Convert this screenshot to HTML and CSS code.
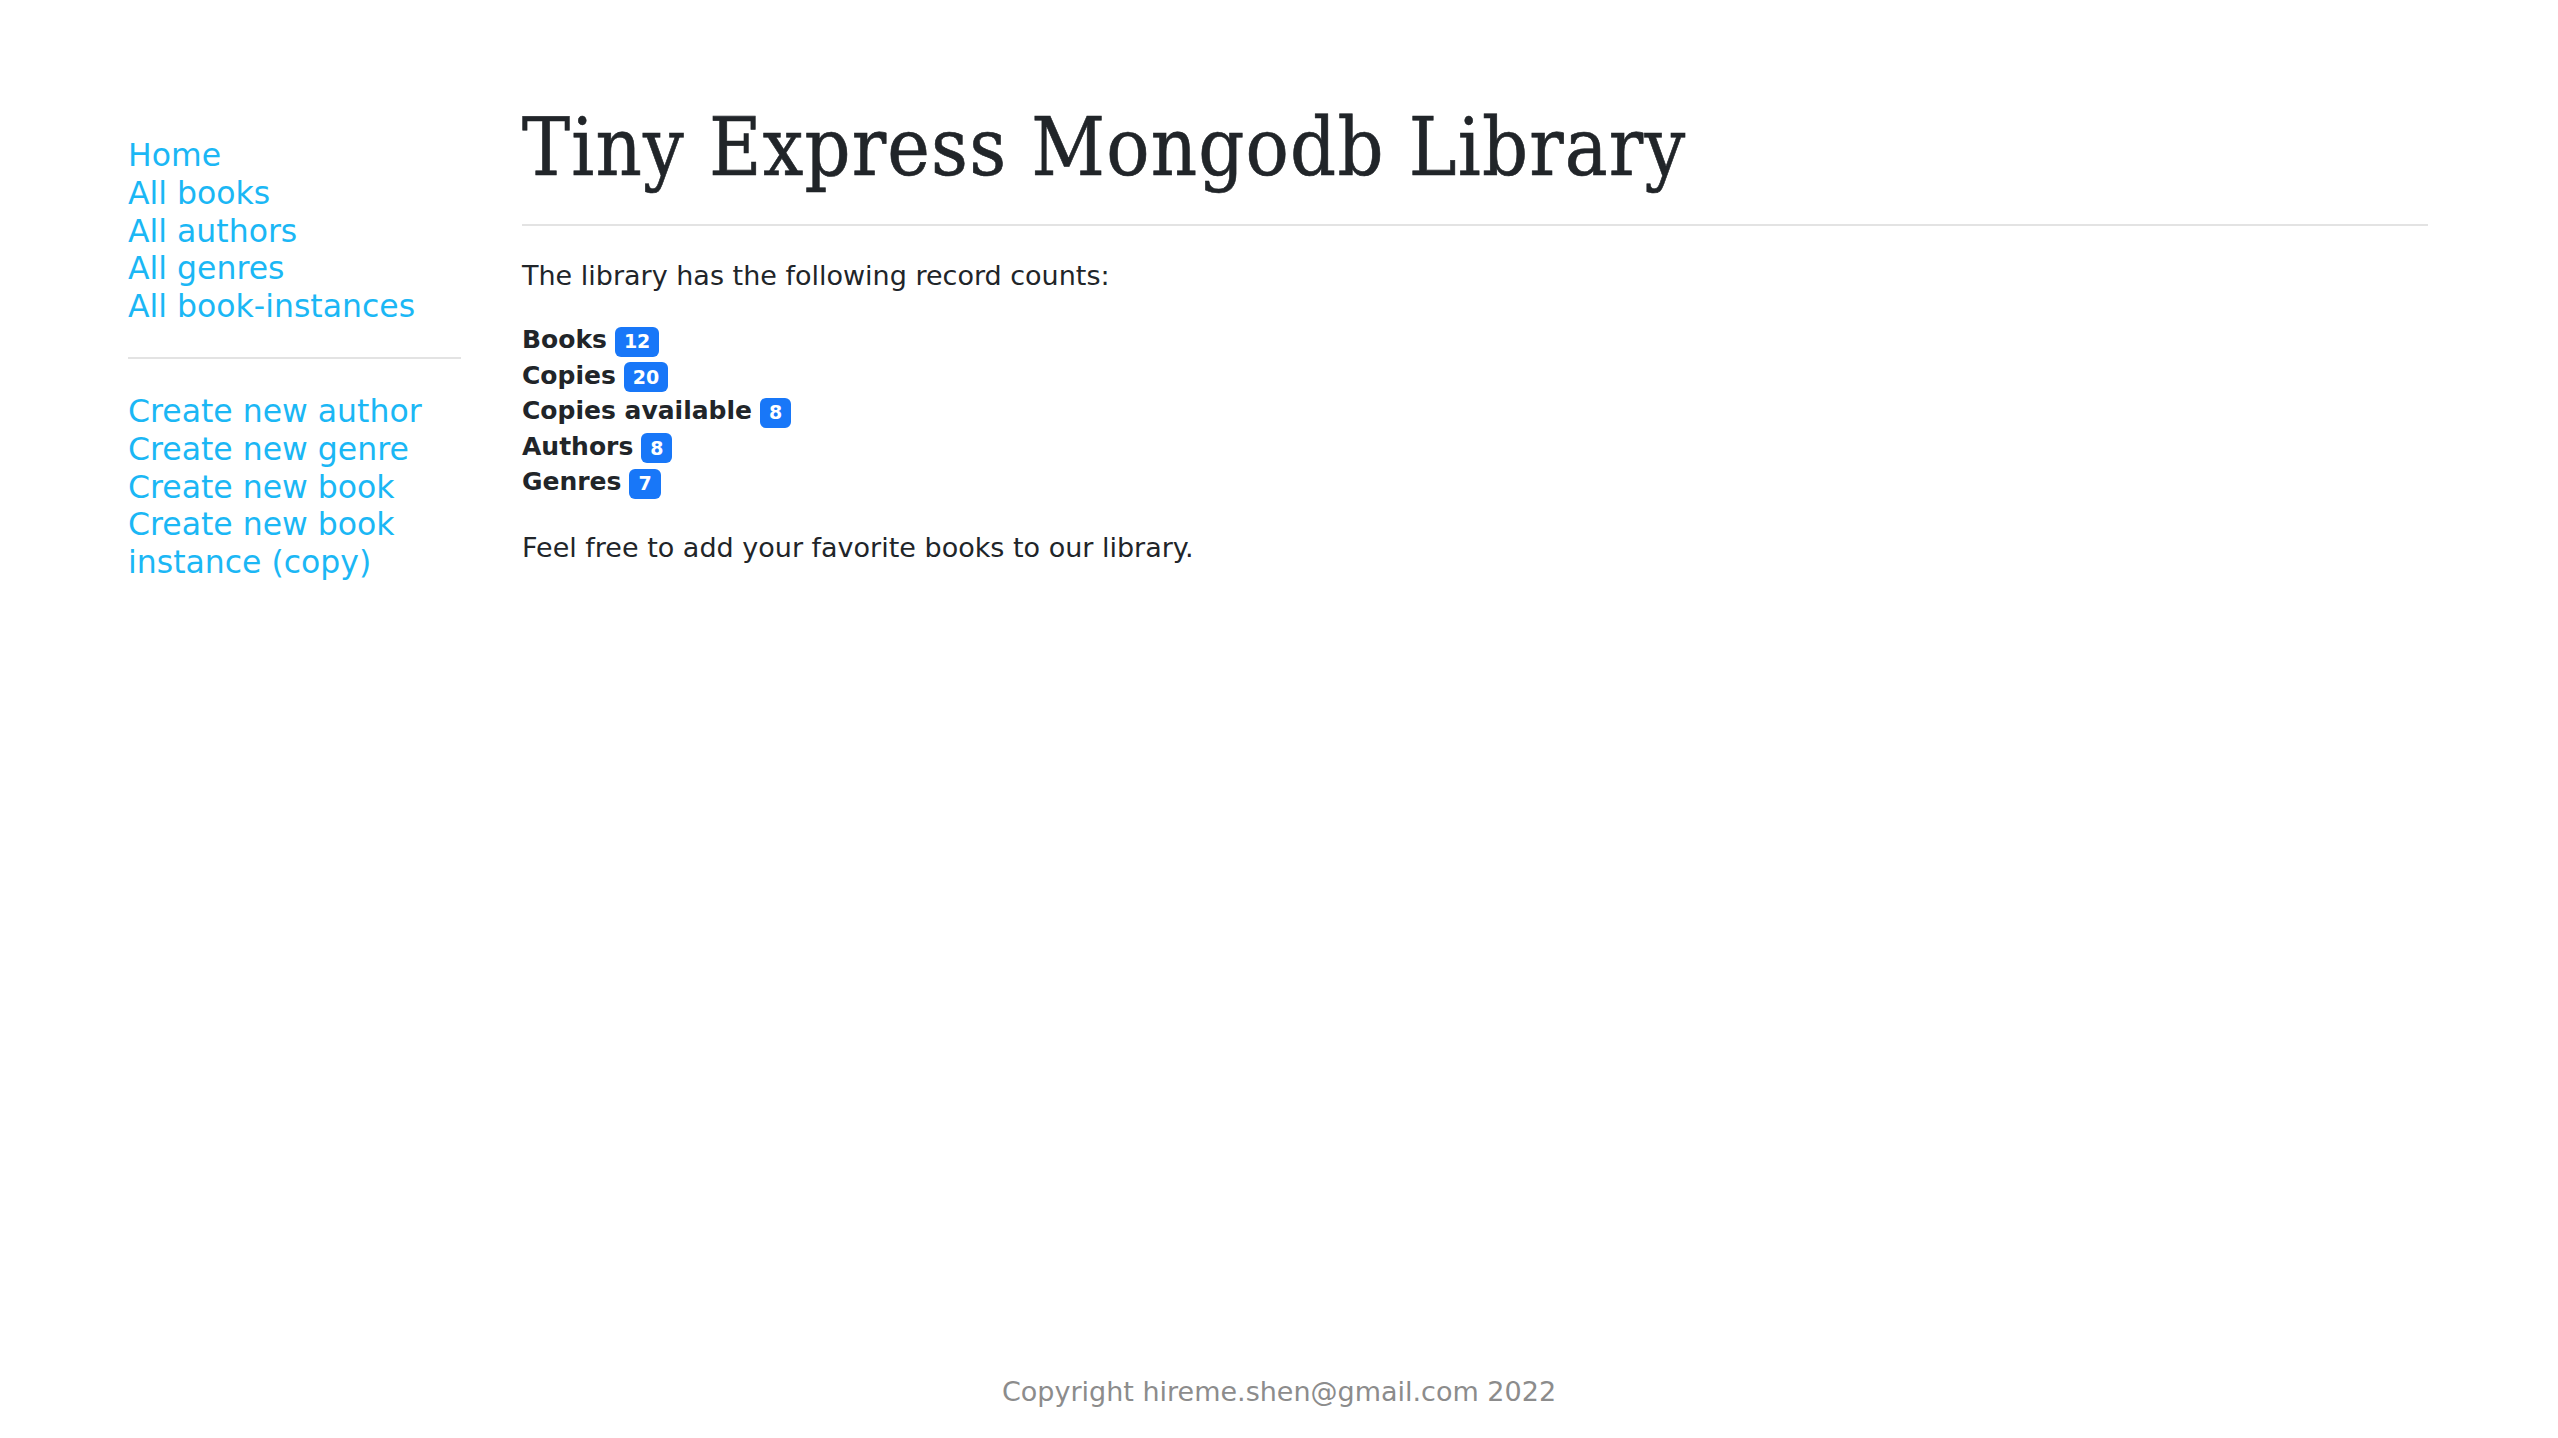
FILE: index.html
```html
<!DOCTYPE html>
<html lang="en">
<head>
<meta charset="utf-8">
<title>Local Library</title>
<link rel="stylesheet" href="styles.css">
</head>
<body>
<div class="page">
  <div class="row">
    <nav class="sidebar">
      <ul class="nav-list">
        <li><a href="#">Home</a></li>
        <li><a href="#">All books</a></li>
        <li><a href="#">All authors</a></li>
        <li><a href="#">All genres</a></li>
        <li><a href="#">All book-instances</a></li>
      </ul>
      <hr class="side-rule">
      <ul class="nav-list">
        <li><a href="#">Create new author</a></li>
        <li><a href="#">Create new genre</a></li>
        <li><a href="#">Create new book</a></li>
        <li><a href="#">Create new book instance (copy)</a></li>
      </ul>
    </nav>
    <main class="content">
      <h1 class="title">Tiny Express Mongodb Library</h1>
      <hr class="main-rule">
      <p class="intro">The library has the following record counts:</p>
      <ul class="counts">
        <li><strong>Books</strong> <span class="badge">12</span></li>
        <li><strong>Copies</strong> <span class="badge">20</span></li>
        <li><strong>Copies available</strong> <span class="badge">8</span></li>
        <li><strong>Authors</strong> <span class="badge">8</span></li>
        <li><strong>Genres</strong> <span class="badge">7</span></li>
      </ul>
      <p class="outro">Feel free to add your favorite books to our library.</p>
    </main>
  </div>
  <footer class="footer">Copyright hireme.shen@gmail.com 2022</footer>
</div>
</body>
</html>
```
FILE: styles.css
```css
html, body {
  margin: 0;
  padding: 0;
  background: #ffffff;
}
body {
  font-family: "DejaVu Sans", "Liberation Sans", sans-serif;
  color: #212529;
}
.page {
  min-height: 100vh;
  display: flex;
  flex-direction: column;
}
.row {
  flex: 1;
  display: flex;
  gap: 61px;
  padding: 101px 130px 0 128px;
}
.sidebar {
  width: 333px;
  flex: none;
  padding-top: 36px;
}
.nav-list {
  list-style: none;
  margin: 0;
  padding: 0;
  font-size: 31.5px;
  line-height: 37.8px;
}
.nav-list a {
  color: #1bb7f5;
  text-decoration: none;
}
.side-rule {
  border: 0;
  height: 2px;
  background: #e3e3e3;
  margin: 31px 0 34px 0;
}
.content {
  flex: 1;
  min-width: 0;
}
.title {
  margin: 0;
  font-family: "DejaVu Serif", "Liberation Serif", serif;
  font-stretch: condensed;
  font-weight: 400;
  font-size: 80px;
  line-height: 94px;
  letter-spacing: 1.2px;
  -webkit-text-stroke: 0.6px #212529;
  color: #212529;
}
.main-rule {
  border: 0;
  height: 2px;
  background: #e3e3e3;
  margin: 29px 0 32px 0;
}
.intro, .outro {
  margin: 0;
  font-size: 27px;
  line-height: 36px;
}
.counts {
  list-style: none;
  margin: 28px 0 30px 0;
  padding: 0;
  font-size: 25px;
  line-height: 35.5px;
}
.counts strong {
  font-weight: 700;
}
.badge {
  display: inline-block;
  background: #1877f8;
  color: #ffffff;
  font-size: 19px;
  font-weight: 700;
  line-height: 1;
  padding: 5.5px 9px;
  border-radius: 6px;
  vertical-align: baseline;
}
.footer {
  text-align: center;
  color: #8c8c8c;
  font-size: 27px;
  line-height: 32px;
  padding-bottom: 30px;
}
```
